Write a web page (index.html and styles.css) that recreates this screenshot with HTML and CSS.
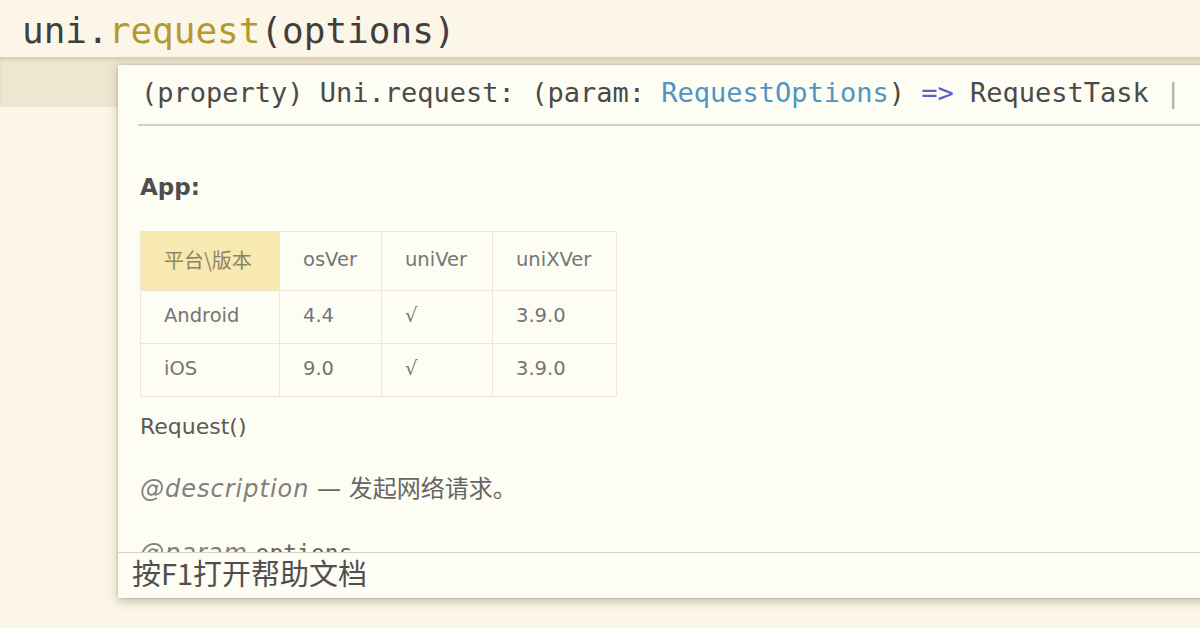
FILE: index.html
```html
<!DOCTYPE html>
<html lang="zh">
<head>
<meta charset="utf-8">
<title>uni.request</title>
<link rel="stylesheet" href="styles.css">
</head>
<body>
<div class="editor">
  <div class="code-line"><span class="id">uni.</span><span class="fn">request</span><span class="id">(options)</span></div>
  <div class="code-line current"></div>
</div>

<div class="hover">
  <div class="sig"><span>(property) Uni.request: (param: </span><span class="type">RequestOptions</span><span>) </span><span class="arrow">=&gt;</span><span> RequestTask </span><span class="bar">|</span></div>
  <div class="doc">
    <p class="app">App:</p>
    <table class="compat">
      <tr class="head"><th class="corner cjk">平台\版本</th><th>osVer</th><th>uniVer</th><th>uniXVer</th></tr>
      <tr><td>Android</td><td>4.4</td><td>√</td><td>3.9.0</td></tr>
      <tr><td>iOS</td><td>9.0</td><td>√</td><td>3.9.0</td></tr>
    </table>
    <p class="plain">Request()</p>
    <p class="desc"><em>@description</em> — <span class="cjk-lg">发起网络请求。</span></p>
    <p class="desc"><em>@param</em> <code>options</code></p>
  </div>
  <div class="foot">按F1打开帮助文档</div>
</div>
</body>
</html>
```

FILE: styles.css
```css
html, body {
  margin: 0;
  padding: 0;
}
body {
  width: 1200px;
  height: 628px;
  overflow: hidden;
  position: relative;
  background: #fbf6e7;
  font-family: "DejaVu Sans", "Noto Sans CJK SC", sans-serif;
}

.editor {
  display: flex;
  flex-direction: column;
}
.code-line {
  height: 57px;
  line-height: 62px;
  padding-left: 22px;
  font-family: "DejaVu Sans Mono", "Liberation Mono", monospace;
  font-size: 36px;
  color: #3f3f3f;
  white-space: pre;
}
.code-line .fn {
  color: #b39a30;
}
.code-line.current {
  height: 50px;
  background: #efe6d1;
  box-shadow: inset 0 3px 3px rgba(120, 100, 60, 0.18);
}

.hover {
  position: absolute;
  left: 118px;
  top: 65px;
  width: 1130px;
  height: 533px;
  background: #fefdf4;
  box-shadow: 0 3px 10px rgba(90, 80, 50, 0.35), 0 0 2px rgba(90, 80, 50, 0.3);
  display: flex;
  flex-direction: column;
}

.sig {
  flex: none;
  height: 59px;
  margin-left: 20px;
  padding-left: 3px;
  border-bottom: 2px solid #d3d0c6;
  font-family: "DejaVu Sans Mono", "Liberation Mono", monospace;
  font-size: 27px;
  line-height: 56px;
  color: #4a4a4a;
  white-space: pre;
}
.sig .type { color: #4f95c4; }
.sig .arrow { color: #5d5fc8; }
.sig .bar { color: #b5b3a6; }

.doc {
  flex: 1;
  min-height: 0;
  overflow: hidden;
  padding: 46px 22px 0 22px;
  color: #555;
}
.doc p {
  margin: 0;
  font-size: 22px;
  line-height: 30px;
  white-space: nowrap;
}
.doc .app {
  font-weight: bold;
  font-size: 23px;
  color: #4e4e4e;
  margin-bottom: 29px;
}
.compat {
  border-collapse: collapse;
  font-size: 19.5px;
  color: #757575;
}
.compat th, .compat td {
  border: 1px solid #ece6d6;
  padding: 0 22px 4px 23px;
  text-align: left;
  font-weight: normal;
  white-space: nowrap;
}
.compat tr { height: 53px; }
.compat tr.head { height: 59px; }
.compat th:nth-child(1), .compat td:nth-child(1) { width: 93px; }
.compat th:nth-child(2), .compat td:nth-child(2) { width: 56px; }
.compat th:nth-child(3), .compat td:nth-child(3) { width: 65px; }
.compat th:nth-child(4), .compat td:nth-child(4) { width: 78px; }
.compat th.corner {
  background: #f7e9b0;
  color: #8c8468;
}
.cjk { font-family: "Noto Sans CJK SC", sans-serif; font-size: 20px; }

.doc .plain {
  margin-top: 15px;
  color: #5a5a5a;
}
.doc .desc {
  margin-top: 30px;
  font-size: 24px;
  color: #666;
}
.doc .desc + .desc { margin-top: 34px; }
.doc .desc em {
  color: #808080;
  letter-spacing: 1px;
}
.doc .desc code {
  font-family: "DejaVu Sans Mono", monospace;
  font-size: 23px;
}
.cjk-lg {
  font-family: "Noto Sans CJK SC", sans-serif;
  font-size: 24px;
}

.foot {
  flex: none;
  height: 45px;
  border-top: 1px solid #d7d4ca;
  padding-left: 14px;
  font-family: "Noto Sans CJK SC", sans-serif;
  font-size: 29px;
  line-height: 38px;
  color: #4f4f4f;
}
```
